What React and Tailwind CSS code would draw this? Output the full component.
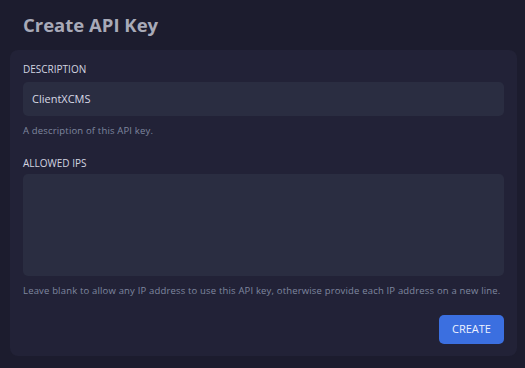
export default function App() {
	return (
		<div className="min-h-[368px] w-[525px] bg-[#1c1c2e] pl-[10px] pr-[8px] pt-[12px] pb-[12px] font-['Open_Sans',sans-serif]">
			<h1 className="pl-[13px] text-[18.5px] leading-[26px] font-bold text-[#a8aab8]">Create API Key</h1>
			<div className="mt-[12px] rounded-[8px] bg-[#222237] px-[13px] pt-[12px] pb-[12px]">
				<label className="block text-[10px] leading-[14px] uppercase text-[#d2d4e0]">Description</label>
				<div className="mt-[6px] flex h-[34px] items-center rounded-[5px] bg-[#2a2d41] px-[9px] text-[11px] text-[#d6d8e4]">
					ClientXCMS
				</div>
				<p className="mt-[8px] text-[9.5px] leading-[14px] tracking-[0.17px] text-[#7f879f]">A description of this API key.</p>

				<label className="mt-[18px] block text-[10px] leading-[14px] uppercase text-[#d2d4e0]">Allowed IPs</label>
				<div className="mt-[4px] h-[102px] rounded-[5px] bg-[#2a2d41]"></div>
				<p className="mt-[8px] whitespace-nowrap text-[9.5px] leading-[14px] tracking-[0.17px] text-[#7f879f]">
					Leave blank to allow any IP address to use this API key, otherwise provide each IP address on a new line.
				</p>

				<div className="mt-[17px] flex justify-end">
					<button className="h-[29px] w-[65px] rounded-[5px] bg-[#3b6fe0] text-[11px] text-[#eef2ff]">CREATE</button>
				</div>
			</div>
		</div>
	);
}
